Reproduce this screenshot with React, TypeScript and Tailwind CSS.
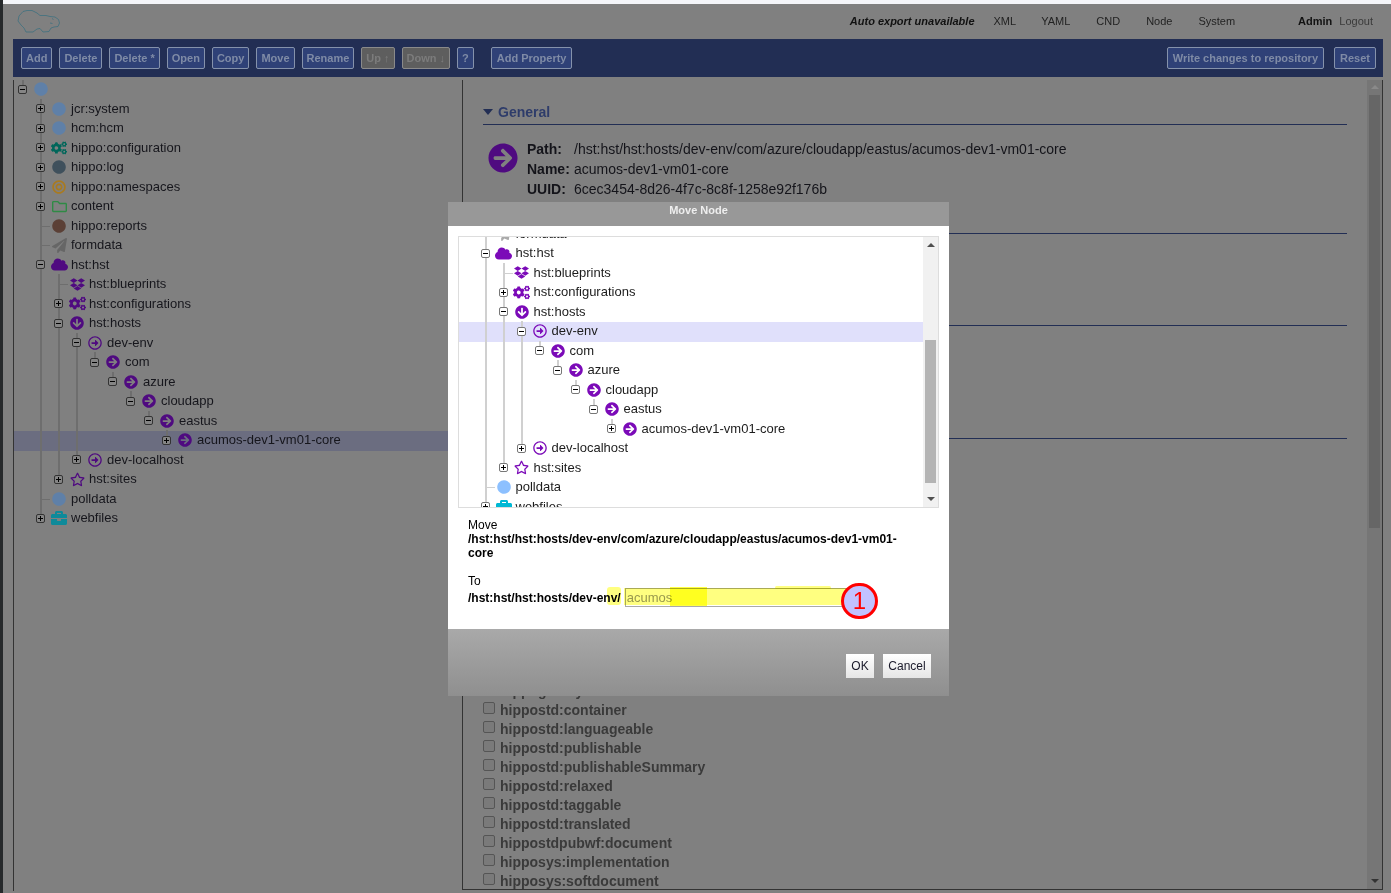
import React from "react";
import {
  FaArrowCircleDown,
  FaArrowCircleRight,
  FaBriefcase,
  FaBullseye,
  FaCircle,
  FaCogs,
  FaDropbox,
  FaCloud,
  FaPaperPlane,
  FaRegArrowAltCircleRight,
  FaRegFolder,
  FaRegStar,
} from "react-icons/fa";

type Tone = "blue" | "teal" | "slate" | "orange" | "green" | "brown" | "gray" | "purple" | "cyan";

type Row = {
  level: number;
  label: string;
  icon: React.ComponentType<{ size?: number; className?: string }>;
  size: number;
  tone: Tone;
  toggle?: "+" | "-";
  rails: number[];
  last?: boolean;
};

const dimTones: Record<Tone, string> = {
  blue: "text-[#5f80a8]",
  teal: "text-[#00665a]",
  slate: "text-[#3f505c]",
  orange: "text-[#a87a20]",
  green: "text-[#2f8a45]",
  brown: "text-[#5b4036]",
  gray: "text-[#666666]",
  purple: "text-[#4f0a80]",
  cyan: "text-[#0e8a9a]",
};

const brightTones: Record<Tone, string> = {
  blue: "text-[#8cc0ff]",
  teal: "text-[#00a08a]",
  slate: "text-[#607d8b]",
  orange: "text-[#ffb300]",
  green: "text-[#43c860]",
  brown: "text-[#795548]",
  gray: "text-[#aaaaaa]",
  purple: "text-[#7b0ab8]",
  cyan: "text-[#00b8d4]",
};

const rows: Row[] = [
  { level: 0, label: "", icon: FaCircle, size: 14, tone: "blue", toggle: "-", rails: [], last: true },
  { level: 1, label: "jcr:system", icon: FaCircle, size: 14, tone: "blue", toggle: "+", rails: [] },
  { level: 1, label: "hcm:hcm", icon: FaCircle, size: 14, tone: "blue", toggle: "+", rails: [] },
  { level: 1, label: "hippo:configuration", icon: FaCogs, size: 16, tone: "teal", toggle: "+", rails: [] },
  { level: 1, label: "hippo:log", icon: FaCircle, size: 14, tone: "slate", toggle: "+", rails: [] },
  { level: 1, label: "hippo:namespaces", icon: FaBullseye, size: 14, tone: "orange", toggle: "+", rails: [] },
  { level: 1, label: "content", icon: FaRegFolder, size: 15, tone: "green", toggle: "+", rails: [] },
  { level: 1, label: "hippo:reports", icon: FaCircle, size: 14, tone: "brown", rails: [] },
  { level: 1, label: "formdata", icon: FaPaperPlane, size: 15, tone: "gray", rails: [] },
  { level: 1, label: "hst:hst", icon: FaCloud, size: 17, tone: "purple", toggle: "-", rails: [] },
  { level: 2, label: "hst:blueprints", icon: FaDropbox, size: 15, tone: "purple", rails: [1] },
  { level: 2, label: "hst:configurations", icon: FaCogs, size: 17, tone: "purple", toggle: "+", rails: [1] },
  { level: 2, label: "hst:hosts", icon: FaArrowCircleDown, size: 14, tone: "purple", toggle: "-", rails: [1] },
  { level: 3, label: "dev-env", icon: FaRegArrowAltCircleRight, size: 14, tone: "purple", toggle: "-", rails: [1, 2] },
  { level: 4, label: "com", icon: FaArrowCircleRight, size: 14, tone: "purple", toggle: "-", rails: [1, 2, 3], last: true },
  { level: 5, label: "azure", icon: FaArrowCircleRight, size: 14, tone: "purple", toggle: "-", rails: [1, 2, 3], last: true },
  { level: 6, label: "cloudapp", icon: FaArrowCircleRight, size: 14, tone: "purple", toggle: "-", rails: [1, 2, 3], last: true },
  { level: 7, label: "eastus", icon: FaArrowCircleRight, size: 14, tone: "purple", toggle: "-", rails: [1, 2, 3], last: true },
  { level: 8, label: "acumos-dev1-vm01-core", icon: FaArrowCircleRight, size: 14, tone: "purple", toggle: "+", rails: [1, 2, 3], last: true },
  { level: 3, label: "dev-localhost", icon: FaRegArrowAltCircleRight, size: 14, tone: "purple", toggle: "+", rails: [1, 2], last: true },
  { level: 2, label: "hst:sites", icon: FaRegStar, size: 15, tone: "purple", toggle: "+", rails: [1], last: true },
  { level: 1, label: "polldata", icon: FaCircle, size: 14, tone: "blue", rails: [] },
  { level: 1, label: "webfiles", icon: FaBriefcase, size: 16, tone: "cyan", toggle: "+", rails: [], last: true },
];

const leftButtons = ["Add", "Delete", "Delete *", "Open", "Copy", "Move", "Rename"];
const mixins = [
  "hippogallery",
  "hippostd:container",
  "hippostd:languageable",
  "hippostd:publishable",
  "hippostd:publishableSummary",
  "hippostd:relaxed",
  "hippostd:taggable",
  "hippostd:translated",
  "hippostdpubwf:document",
  "hipposys:implementation",
  "hipposys:softdocument",
];

function ToolButton({ label, disabled, wide }: { label: string; disabled?: boolean; wide?: boolean }) {
  const base = `h-[22px] rounded-[2px] border text-[11px] font-bold ${wide ? "px-[5px]" : "px-[4px]"}`;
  return (
    <button
      className={
        disabled
          ? `${base} border-[#8a8a8a] bg-[#5e5e5e] text-[#7c7c7c]`
          : `${base} border-[#8592ab] bg-[#2f4177] text-[#7f8ba6]`
      }
    >
      {label}
    </button>
  );
}

function TreeRows({ bright, selected }: { bright?: boolean; selected: number }) {
  const tones = bright ? brightTones : dimTones;
  const railColor = bright ? "bg-[#d0d0d0]" : "bg-[#6e6e6e]";

  return (
    <>
      {rows.map((row, i) => (
        <div key={i} className="relative h-[19.5px]">
          {i === selected && (
            <div className={`absolute inset-x-0 top-[0.75px] h-[19.5px] ${bright ? "bg-[#e0e0fb]" : "bg-[#6b6d80]"}`} />
          )}
          <div className={`relative flex items-center h-full ${bright ? "-ml-[0.5px]" : ""}`}>
            {Array.from({ length: row.level }).map((_, col) => (
              <div key={col} className="relative w-[18px] h-full shrink-0">
                {row.rails.includes(col) && <div className={`absolute left-[8px] top-0 bottom-0 w-[2px] ${railColor}`} />}
              </div>
            ))}
            <div className="relative w-[18px] h-full shrink-0 pr-[1px] flex items-center justify-center">
              <div className={`absolute left-[8px] top-0 w-[2px] ${railColor} ${row.last ? "h-1/2" : "h-full"}`} />
              {!row.toggle && <div className={`absolute left-[9px] top-1/2 w-[9px] h-px ${railColor}`} />}
              {row.toggle && (
                <div
                  className={`relative w-[9px] h-[9px] rounded-[2px] border flex items-center justify-center ${
                    bright ? "border-[#777777] bg-white" : "border-[#333333] bg-[#858585]"
                  }`}
                >
                  <div className="w-[5px] h-px bg-black" />
                  {row.toggle === "+" && <div className="absolute w-px h-[5px] bg-black" />}
                </div>
              )}
            </div>
            <div className="w-[18px] h-full shrink-0 flex items-center justify-center">
              <row.icon size={row.size} className={tones[row.tone]} />
            </div>
            <span className={`ml-[3px] text-[13px] whitespace-nowrap ${bright ? "text-[#1c1c1c]" : "text-[#16161c]"}`}>
              {row.label}
            </span>
          </div>
        </div>
      ))}
    </>
  );
}

function MoveDialog() {
  return (
    <div className="absolute left-[448px] top-[202px] w-[501px] h-[494px] flex flex-col">
      <div className="h-[24px] bg-[#989898] text-center text-[11px] font-bold text-[#eeeeee]">Move Node</div>

      <div className="relative h-[403px] bg-white">
        <div className="flex mx-[10px] mt-[10px] h-[272px] border border-[#dddddd]">
          <div className="flex-1 overflow-hidden">
            <div className="mt-[-169.25px]">
              <TreeRows bright selected={13} />
            </div>
          </div>
          <div className="w-[15px] bg-[#f1f1f1] flex flex-col items-center">
            <div className="mt-[6px] border-x-[4px] border-b-[4px] border-x-transparent border-b-[#505050]" />
            <div className="mt-[93px] w-[11px] h-[143px] bg-[#b4b4b4]" />
            <div className="mt-[14px] border-x-[4px] border-t-[4px] border-x-transparent border-t-[#505050]" />
          </div>
        </div>

        <div className="pl-[20px] mt-[10px] w-[462px] text-[12px] leading-[14px] text-black">
          <div>Move</div>
          <div className="font-bold">/hst:hst/hst:hosts/dev-env/com/azure/cloudapp/eastus/acumos-dev1-vm01-core</div>
          <div className="mt-[14px]">To</div>
          <div className="flex items-center font-bold">
            <span>/hst:hst/hst:hosts/dev-env/</span>
            <input
              readOnly
              value="acumos"
              className="ml-[4px] w-[222px] h-[19px] px-[1px] border border-[#aaaaaa] text-[13px] font-normal text-[#999999] outline-none"
            />
          </div>
        </div>

        {/* hand drawn marker over the target field */}
        <div className="absolute left-[159px] top-[361px] w-[14px] h-[18px] bg-[#ffff80] mix-blend-multiply rounded-[3px]" />
        <div className="absolute left-[176px] top-[362px] w-[222px] h-[17px] bg-[#ffff80] mix-blend-multiply" />
        <div className="absolute left-[222px] top-[361px] w-[37px] h-[19px] bg-[#ffff40] mix-blend-multiply" />
        <div className="absolute left-[327px] top-[360px] w-[56px] h-[3px] bg-[#ffff80] mix-blend-multiply rounded-full" />
        <div className="absolute left-[393px] top-[357px] w-[37px] h-[36px] rounded-full border-[3px] border-[#ff0000] bg-[#c2c2ff] flex items-center justify-center text-[24px] leading-none text-[#ff0000]">
          1
        </div>
      </div>

      <div className="flex-1 flex items-start justify-end gap-[9px] pr-[18px] pt-[25px] bg-gradient-to-b from-[#a9a9a9] to-[#8f8f8f]">
        <button className="h-[24px] w-[28px] bg-gradient-to-b from-white to-[#e6e6e6] text-[12px] text-[#1a1a2a]">OK</button>
        <button className="h-[24px] w-[48px] bg-gradient-to-b from-white to-[#e6e6e6] text-[12px] text-[#1a1a2a]">Cancel</button>
      </div>
    </div>
  );
}

export default function App() {
  return (
    <div className="relative flex h-screen overflow-hidden bg-[#808080] font-['Liberation_Sans',Arial,sans-serif]">
      <div className="w-[3px] shrink-0 bg-[#26292b]" />

      <div className="flex-1 flex flex-col min-w-0">
        <div className="h-[4px] shrink-0 bg-[#f4f5f9]" />

        <header className="h-[35px] shrink-0 flex items-center pl-[14px] pr-[18px] text-[11px] text-[#222222]">
          <svg width="44" height="25" viewBox="0 0 44 25" fill="none" stroke="#356f80" strokeWidth="0.7">
            <path d="M1 12 L2 7 L6 2.500 L10 1.500 L15 1.500 L20 4 L23 6.500 L29 6.500 L33 7.500 L38 8 L41.500 10.500 L42.500 14 L41 17.500 L37 18 L34 19 L32 22.500 L26 23 L23 19.500 L20 20 L16 23 L9 23 L7 19 L4 16 Z" />
            <path d="M35 9.500 L36.500 10.500 M33 14 L35.500 14.500" />
          </svg>
          <b className="ml-auto italic text-[#111111]">Auto export unavailable</b>
          <span className="ml-[19px]">XML</span>
          <span className="ml-[25px]">YAML</span>
          <span className="ml-[26px]">CND</span>
          <span className="ml-[26px]">Node</span>
          <span className="ml-[26px]">System</span>
          <b className="ml-[63px] text-[#111111]">Admin</b>
          <span className="ml-[7px] text-[#3a3a3a]">Logout</span>
        </header>

        <div className="h-[38px] shrink-0 ml-[10px] mr-[8px] flex items-center gap-[7px] pl-[8px] pr-[7px] bg-[#222e54]">
          {leftButtons.map((label) => (
            <ToolButton key={label} label={label} />
          ))}
          <ToolButton label="Up ↑" disabled />
          <ToolButton label="Down ↓" disabled />
          <ToolButton label="?" />
          <div className="w-[3px]" />
          <ToolButton label="Add Property" wide />
          <div className="flex-1 flex items-center justify-end gap-[10px]">
            <ToolButton label="Write changes to repository" wide />
            <ToolButton label="Reset" wide />
          </div>
        </div>

        <div className="flex-1 min-h-0 flex ml-[10px] mr-[8px] mt-[3px] mb-[2px]">
          <div className="w-[449px] shrink-0 border-l border-[#333333] overflow-hidden">
            <div className="-mt-[0.75px]">
              <TreeRows selected={18} />
            </div>
          </div>

          <div className="flex-1 min-w-0 flex mb-px border-l border-r border-b border-[#333333]">
            <div className="flex-1 min-w-0 overflow-hidden pl-[20px] pr-[20px] pt-[24px]">
              <div className="flex items-center gap-[5px] h-[16px] text-[14px] font-bold text-[#2e3c6a]">
                <div className="border-x-[5px] border-t-[6px] border-x-transparent border-t-[#222e54]" />
                General
              </div>
              <div className="mt-[4px] border-t border-[#222e54]" />

              <div className="mt-[14px] flex text-[14px] leading-[20px] text-[#14141a]">
                <FaArrowCircleRight size={30} className="ml-[5px] mt-[4px] text-[#4f0a80]" />
                <div className="ml-[9px] grid grid-cols-[47px_1fr]">
                  <b>Path:</b>
                  <span>/hst:hst/hst:hosts/dev-env/com/azure/cloudapp/eastus/acumos-dev1-vm01-core</span>
                  <b>Name:</b>
                  <span>acumos-dev1-vm01-core</span>
                  <b>UUID:</b>
                  <span>6cec3454-8d26-4f7c-8c8f-1258e92f176b</span>
                </div>
              </div>

              <div className="mt-[34px] border-t border-[#222e54]" />
              <div className="mt-[91px] border-t border-[#222e54]" />
              <div className="mt-[112px] border-t border-[#222e54]" />

              <div className="mt-[243px]">
                {mixins.map((name) => (
                  <div key={name} className="flex items-start h-[19px]">
                    <span className="mt-[1px] w-[12px] h-[12px] rounded-[2px] border border-[#555555] bg-[#7a7a7a]" />
                    <span className="ml-[5px] text-[14px] leading-[19px] font-bold text-[#3a3a3a]">{name}</span>
                  </div>
                ))}
              </div>
            </div>

            <div className="w-[15px] shrink-0 bg-[#767676] flex flex-col items-center">
              <div className="mt-[5px] border-x-[4px] border-b-[4px] border-x-transparent border-b-[#8a8a8a]" />
              <div className="mt-[6px] w-[11px] h-[433px] bg-[#666666]" />
              <div className="mt-auto mb-[6px] border-x-[4px] border-t-[4px] border-x-transparent border-t-[#333333]" />
            </div>
          </div>
        </div>
      </div>

      <MoveDialog />
    </div>
  );
}
